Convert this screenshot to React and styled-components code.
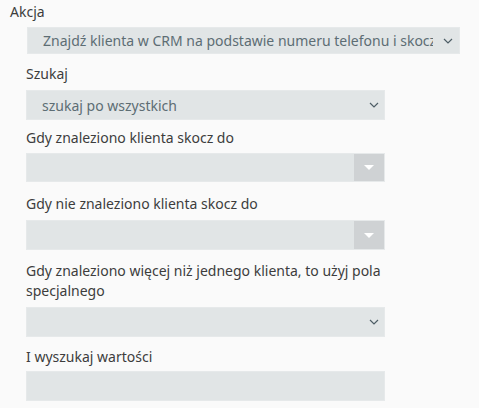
import React from 'react';
import styled, { createGlobalStyle } from 'styled-components';

const GlobalStyle = createGlobalStyle`
  html, body {
    margin: 0;
    padding: 0;
    background: #fafafa;
  }
  body {
    font-family: "Noto Sans", "Open Sans", sans-serif;
    font-size: 14px;
    color: #3d3d3d;
  }
`;

const Page = styled.div`
  padding: 2px 0 0 10px;
`;

const Label = styled.div`
  font-size: 14px;
  line-height: 20px;
  color: #3d3d3d;
  margin-bottom: ${(props) => props.gap || 5}px;
`;

const Group = styled.div`
  margin-left: ${(props) => props.indent}px;
  width: ${(props) => props.width}px;
  margin-bottom: ${(props) => props.after || 0}px;
`;

const Spacer = styled.div`
  height: ${(props) => props.size}px;
`;

const Select = styled.div`
  position: relative;
  box-sizing: border-box;
  display: flex;
  align-items: center;
  height: ${(props) => props.height || 30}px;
  background: #e1e5e6;
  border: 1px solid #e6e9ea;
  padding: 0 26px 0 15px;
  color: #5d6d74;
  font-size: 14px;
  white-space: nowrap;
  overflow: hidden;
`;

const Value = styled.span`
  overflow: hidden;
  flex: 1;
`;

const Chevron = styled.svg`
  position: absolute;
  right: ${(props) => props.right}px;
  top: 50%;
  margin-top: -3px;
`;

const ArrowBox = styled.div`
  position: absolute;
  top: 0;
  right: 0;
  bottom: 0;
  width: 30px;
  background: #cfd2d4;
  display: flex;
  align-items: center;
  justify-content: center;
`;

const Triangle = styled.span`
  width: 0;
  height: 0;
  border-left: 5px solid transparent;
  border-right: 5px solid transparent;
  border-top: 5px solid #ffffff;
`;

const Input = styled.div`
  box-sizing: border-box;
  height: 30px;
  background: #e1e5e6;
  border: 1px solid #e6e9ea;
`;

function ChevronIcon({ right }) {
  return (
    <Chevron right={right} width="10" height="6" viewBox="0 0 10 6">
      <path d="M1 1 L5 5 L9 1" fill="none" stroke="#4e5e66" strokeWidth="1.2" />
    </Chevron>
  );
}

export default function App() {
  return (
    <Page>
      <GlobalStyle />
      <Label>Akcja</Label>
      <Group indent={17} width={433} after={10}>
        <Select height={27}>
          <Value>Znajdź klienta w CRM na podstawie numeru telefonu i skocz do</Value>
          <ChevronIcon right={6} />
        </Select>
      </Group>
      <Group indent={16} width={359}>
        <Label gap={6}>Szukaj</Label>
        <Select>
          <Value>szukaj po wszystkich</Value>
          <ChevronIcon right={5} />
        </Select>
        <Spacer size={8} />
        <Label gap={5}>Gdy znaleziono klienta skocz do</Label>
        <Select height={29}>
          <ArrowBox><Triangle /></ArrowBox>
        </Select>
        <Spacer size={12} />
        <Label gap={6}>Gdy nie znaleziono klienta skocz do</Label>
        <Select height={30}>
          <ArrowBox><Triangle /></ArrowBox>
        </Select>
        <Spacer size={11} />
        <Label gap={6}>Gdy znaleziono więcej niż jednego klienta, to użyj pola specjalnego</Label>
        <Select>
          <ChevronIcon right={5} />
        </Select>
        <Spacer size={10} />
        <Label gap={4}>I wyszukaj wartości</Label>
        <Input />
      </Group>
    </Page>
  );
}
